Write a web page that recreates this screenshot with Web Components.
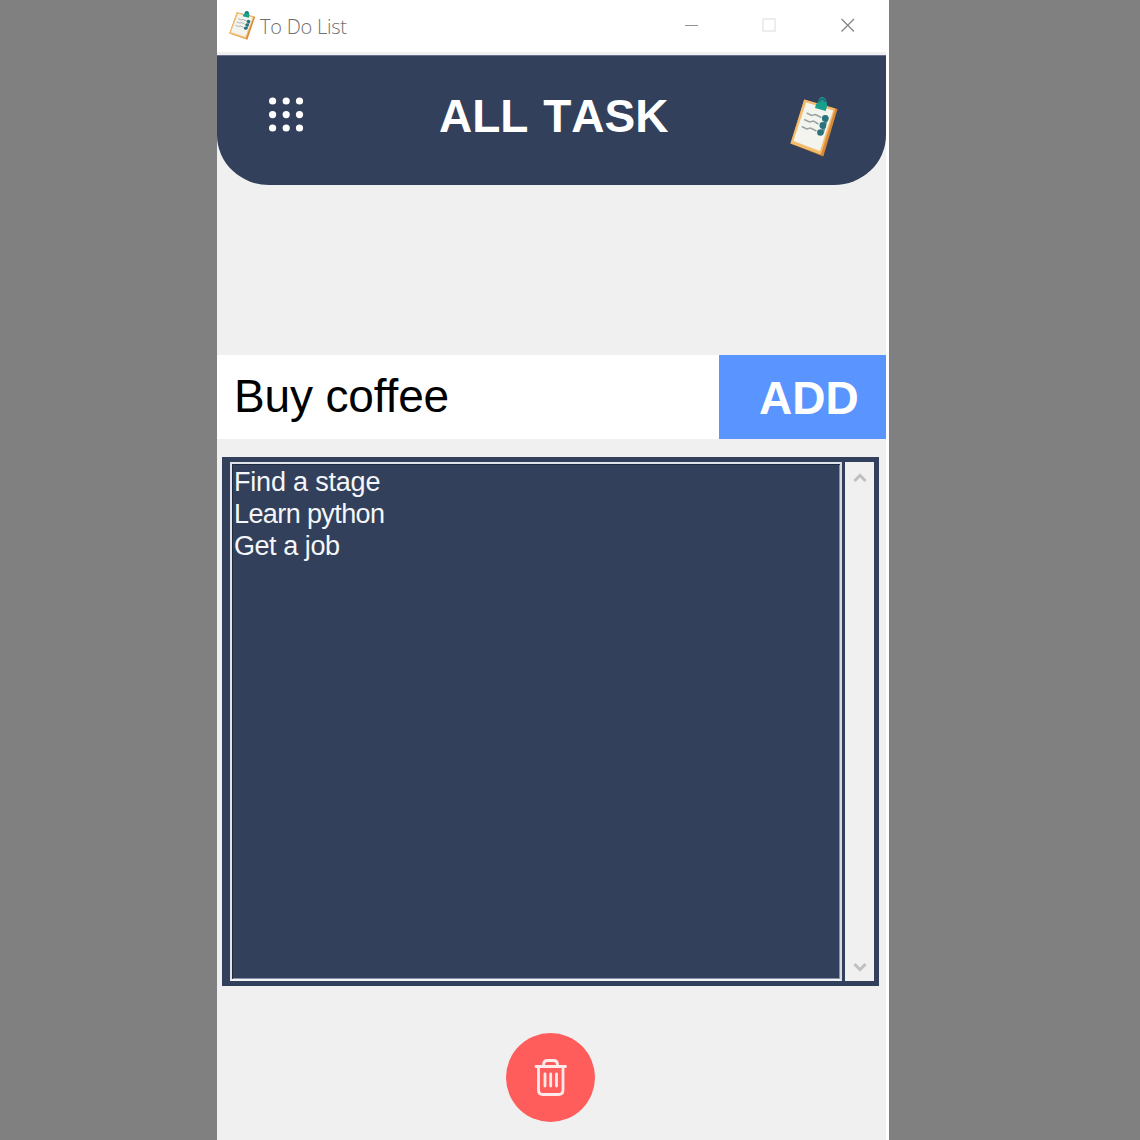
<!DOCTYPE html>
<html lang="en">
<head>
<meta charset="utf-8">
<title>To Do List</title>
<style>
html,body{margin:0;height:100%;background:#808080;overflow:hidden}
body{font-family:"Liberation Sans",Arial,sans-serif}
</style>
</head>
<body>
<todo-app></todo-app>
<script>
const define = (name, html) => customElements.define(name, class extends HTMLElement {
  constructor() {
    super();
    this.attachShadow({ mode: 'open' }).innerHTML = html;
  }
});

define('clip-board', `
<style>:host{display:block}svg{display:block;width:100%;height:100%}</style>
<svg viewBox="0 0 50 60" preserveAspectRatio="none">
  <path d="M14.500 2.500 48.500 12 34 59.500 .5 46.500Z" fill="#d98a36"/>
  <path d="M14.500 2.500 46 11.500 31.500 57.500 .5 46.500Z" fill="#f3bd70"/>
  <path d="M16.500 5.500 44 13.500 30.500 54 3.500 44Z" fill="#f4f4ee"/>
  <path d="M26.500 7.500 29 4.500C29-1 36-1.500 37 4L38 8.500 36.500 14 25.500 11Z" fill="#18a08c"/>
  <path d="M30 5C30 1 36 1 35.500 5" fill="none" stroke="#206f79" stroke-width="2"/>
  <path d="M17 16 22 18.500 26 17.500 32 20.500M14.500 22.500 20 25 24 24 29 27M12 29.500 17 32 21 31 27 34" fill="none" stroke="#9aa1a3" stroke-width="1.500"/>
  <path d="M38 20 33 36" stroke="#6d8a98" stroke-width="3"/>
  <g fill="#28737d"><circle cx="36" cy="21.500" r="3.400"/><circle cx="33.500" cy="28.500" r="3.400"/><circle cx="31" cy="35.500" r="3.300"/></g>
</svg>`);

define('title-bar', `
<style>
:host{display:flex;box-sizing:border-box;height:52px;background:#fff;padding-left:12px}
clip-board{width:27px;height:29px;margin-top:11px}
.name{font:300 20px/28px "Open Sans",sans-serif;color:#707070;margin:13px 0 0 4px;white-space:nowrap;letter-spacing:-.25px}
.controls{margin:17px 33px 0 auto;width:172px;height:17px}
</style>
<clip-board></clip-board><span class="name"><slot></slot></span>
<svg class="controls" viewBox="0 0 172 17" fill="none">
  <path d="M1 8.500H14" stroke="#929292"/>
  <rect x="79" y="2" width="12" height="12" stroke="#e8e8e8" stroke-width="1.500"/>
  <path d="M157.500 2 170 14.500M170 2 157.500 14.500" stroke="#858585" stroke-width="1.300"/>
</svg>`);

define('app-header', `
<style>
:host{display:flex;box-sizing:border-box;height:130px;background:#32405b;border-top:1px solid #64708a;border-radius:0 0 52px 52px/0 0 50px 50px;padding:0 47px 0 51px}
.dots{width:36px;height:36px;margin-top:41px}
h1{font:bold 46px/54px "Liberation Sans",Arial,sans-serif;color:#fff;margin:33px 0 0 135px;font-kerning:none;white-space:nowrap;letter-spacing:0;word-spacing:2px}
clip-board{width:49px;height:60px;margin:41px 0 0 auto}
</style>
<svg class="dots" viewBox="0 0 36 36" fill="#fff">
${[4,17.6,31].map(y => [4.600,18.200,31.500].map(x => `<circle cx="${x}" cy="${y}" r="3.600"/>`).join('')).join('')}
</svg>
<h1><slot></slot></h1>
<clip-board></clip-board>`);

define('task-entry', `
<style>
:host{display:flex;height:84px;background:#fff;font:46px/54px "Liberation Sans",Arial,sans-serif;white-space:nowrap}
.value{flex:1;padding:14px 0 0 17px;color:#000;letter-spacing:-.15px}
.add{width:167px;box-sizing:border-box;background:#5a95ff;color:#fff;font-weight:bold;padding:16px 0 0 40px}
</style>
<div class="value"><slot></slot></div><div class="add">ADD</div>`);

define('task-item', `
<style>:host{display:block;font:27px/32px "Liberation Sans",Arial,sans-serif;color:#f4f6f9;white-space:nowrap;letter-spacing:var(--track,0)}</style><slot></slot>`);

define('scroll-bar', `
<style>
:host{display:flex;flex-direction:column;justify-content:space-between;align-items:center;width:29px;box-sizing:border-box;background:#f0f0f0;padding:10px 0 8px}
svg{width:14px;height:11px}
</style>
<svg viewBox="0 0 14 11"><path d="M1.500 9 7 3.300 12.500 9" fill="none" stroke="#bfbfbf" stroke-width="3"/></svg>
<svg viewBox="0 0 14 11"><path d="M1.500 2 7 7.700 12.500 2" fill="none" stroke="#bfbfbf" stroke-width="3"/></svg>`);

define('task-list', `
<style>
:host{display:flex;gap:3px;box-sizing:border-box;height:529px;background:#32405b;padding:5px 5px 5px 8px}
.list{flex:1;box-sizing:border-box;border:2px solid;border-color:#dfe3ea #d5dae3 #f1f3f7 #dfe3ea;padding:2px 0 0 2px;box-shadow:inset 1px 1px #202b42,inset -1px -1px #8b94a6}
</style>
<div class="list"><slot></slot></div><scroll-bar></scroll-bar>`);

define('delete-button', `
<style>:host{display:block;width:90px;height:90px}svg{display:block}</style>
<svg width="90" height="90" viewBox="0 0 90 90">
  <circle cx="45.500" cy="45.500" r="44.500" fill="#ff5c5c"/>
  <g fill="none" stroke="#ffe9e9" stroke-width="2.800" stroke-linecap="round" stroke-linejoin="round">
    <path d="M31 34.500H60.500M38.500 34V33Q38.500 28.500 42.500 28.500H48.500Q52.500 28.500 52.500 33V34"/>
    <path d="M33.500 35V58Q33.500 62.500 38 62.500H53.500Q58 62.500 58 58V35"/>
    <path d="M40 42V54M45.700 42V54M51.500 42V54"/>
  </g>
</svg>`);

define('todo-app', `
<style>
:host{display:flex;justify-content:flex-start;padding-left:217px;height:1140px}
.window{width:672px;background:#fff;height:1140px}
.client{width:669px;height:1088px;box-sizing:border-box;background:#f0f0f0;padding-top:3px}
task-entry{margin-top:170px}
task-list{margin:18px 7px 0 5px}
delete-button{margin:46px auto 0 288px}
</style>
<div class="window">
  <title-bar>To Do List</title-bar>
  <div class="client">
    <app-header>ALL TASK</app-header>
    <task-entry>Buy coffee</task-entry>
    <task-list>
      <task-item style="--track:-.2px">Find a stage</task-item>
      <task-item style="--track:-.6px">Learn python</task-item>
      <task-item style="--track:-.45px">Get a job</task-item>
    </task-list>
    <delete-button></delete-button>
  </div>
</div>`);
</script>
</body>
</html>
